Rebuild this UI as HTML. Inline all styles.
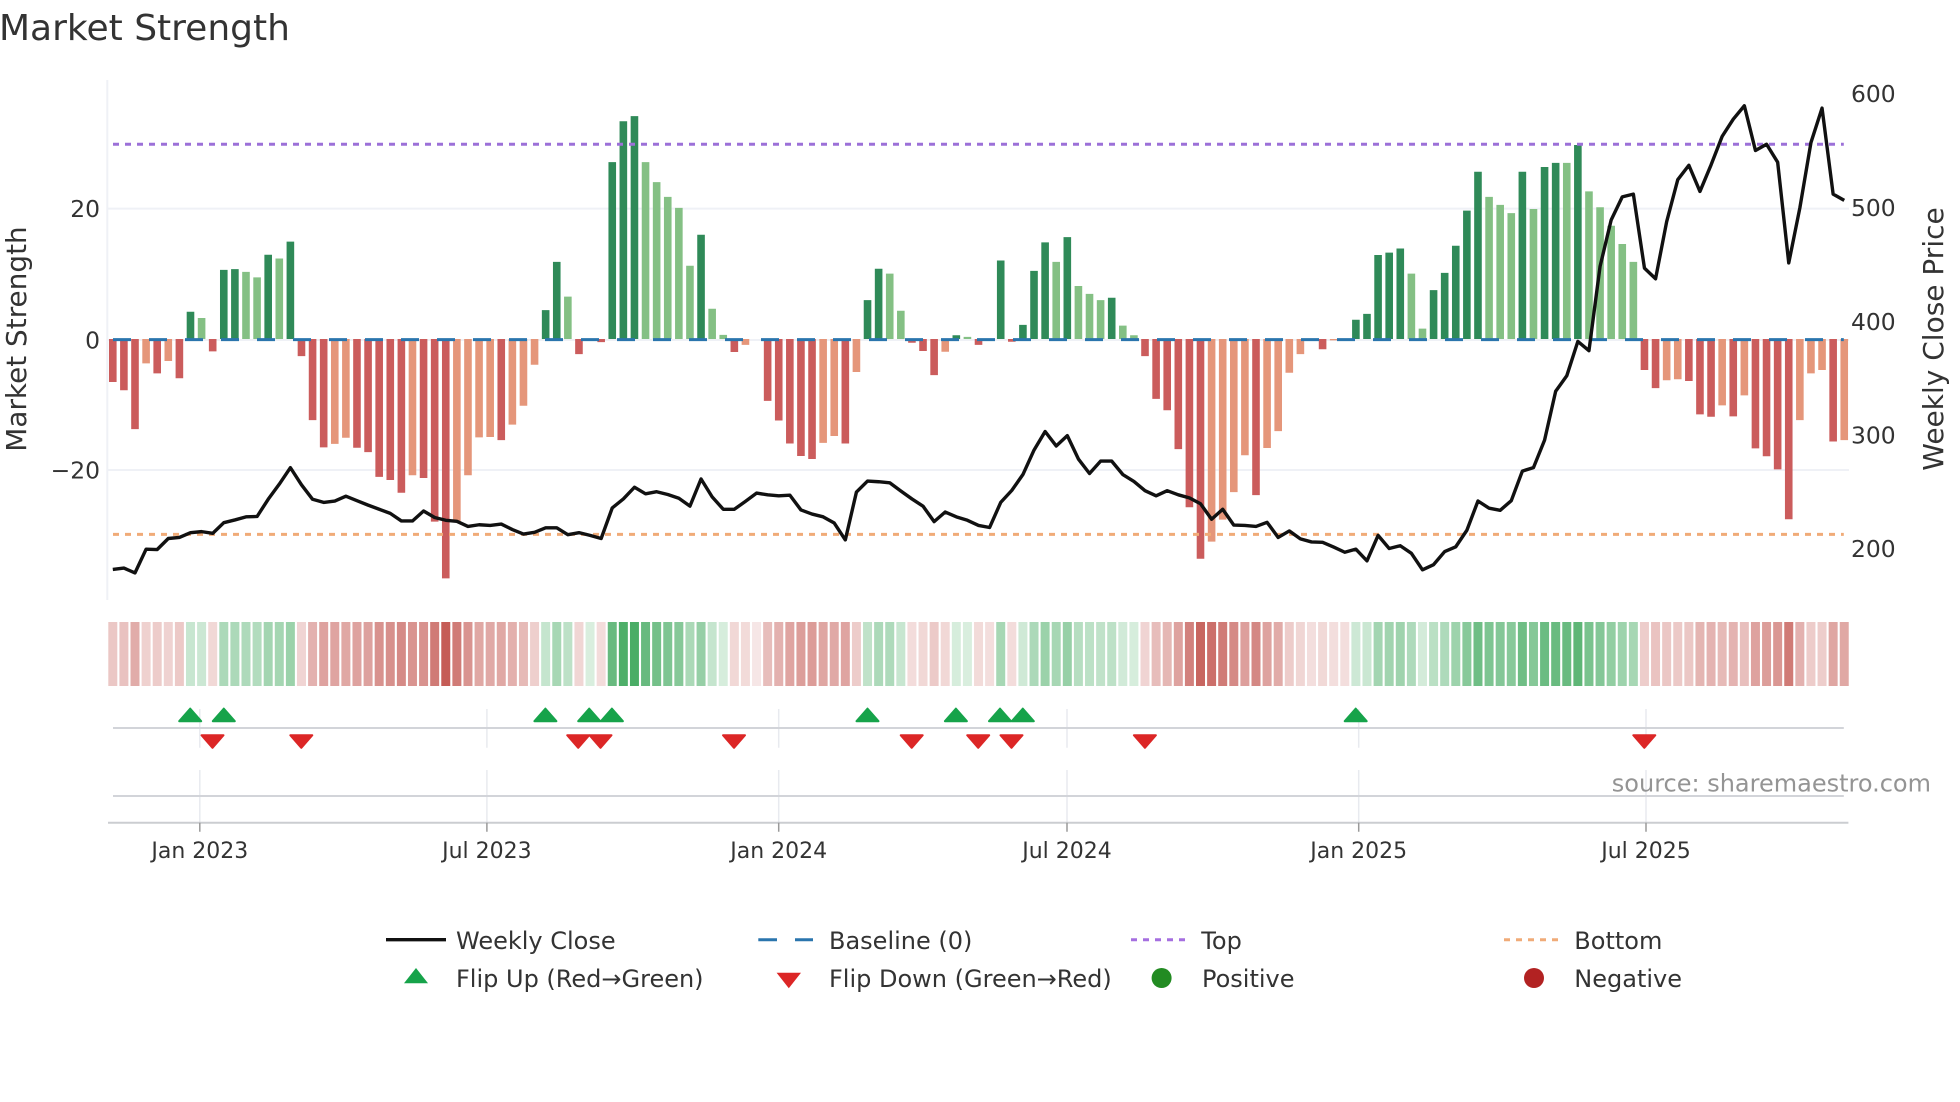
<!DOCTYPE html>
<html><head><meta charset="utf-8"><title>Market Strength</title>
<style>html,body{margin:0;padding:0;background:#fff}svg{display:block}text{font-family:"DejaVu Sans","Liberation Sans",sans-serif;fill:#333}</style></head>
<body>
<svg width="1960" height="1102" viewBox="0 0 1960 1102" xmlns="http://www.w3.org/2000/svg">
<rect width="1960" height="1102" fill="#fff"/>
<text x="-1" y="40" font-size="36">Market Strength</text>
<!-- main grid -->
<g stroke="#eff1f6" stroke-width="2" fill="none">
<path d="M107.3 80V600"/>
<path d="M107 208.6H1849M107 340H1849M107 470H1849"/>
</g>
<!-- bars: x = index, y = source units -->
<g transform="translate(112.8,60) scale(11.099,0.344)" fill="none" stroke-width=".685">
<path stroke="#2f8a58" d="M7 811V732M10 811V610M11 811V608M14 811V566M16 811V528M39 811V727M40 811V587M45 811V297M46 811V178M47 811V163M53 811V508M68 811V698M69 811V607M76 811V800M80 811V583M82 811V770M83 811V613M84 811V530M86 811V515M90 811V691M112 811V755M113 811V738M114 811V567M115 811V560M116 811V548M119 811V669M120 811V619M121 811V540M122 811V438M123 811V325M127 811V325M129 811V311M130 811V299M132 811V247"/>
<path stroke="#84c084" d="M8 811V750M12 811V616M13 811V632M15 811V577M41 811V688M48 811V297M49 811V355M50 811V398M51 811V430M52 811V598M54 811V723M55 811V799M70 811V621M71 811V729M77 811V805M85 811V587M87 811V657M88 811V680M89 811V698M91 811V772M92 811V800M117 811V621M118 811V781M124 811V398M125 811V421M126 811V445M128 811V433M131 811V299M133 811V382M134 811V428M135 811V482M136 811V535M137 811V587"/>
<path stroke="#cb5c5c" d="M0 811V936M1 811V960M2 811V1073M4 811V911M6 811V925M9 811V847M17 811V861M18 811V1047M19 811V1126M22 811V1127M23 811V1140M24 811V1212M25 811V1221M26 811V1258M28 811V1215M29 811V1342M30 811V1507M35 811V1105M42 811V855M44 811V820M56 811V849M59 811V991M60 811V1048M61 811V1115M62 811V1151M63 811V1160M66 811V1115M72 811V822M73 811V846M74 811V916M78 811V828M81 811V819M93 811V861M94 811V985M95 811V1018M96 811V1131M97 811V1300M98 811V1450M103 811V1265M109 811V841M138 811V901M139 811V954M142 811V933M143 811V1030M144 811V1037M146 811V1036M148 811V1129M149 811V1152M150 811V1190M151 811V1335M155 811V1109"/>
<path stroke="#e5967a" d="M3 811V882M5 811V875M20 811V1116M21 811V1098M27 811V1207M31 811V1340M32 811V1207M33 811V1097M34 811V1096M36 811V1060M37 811V1005M38 811V886M57 811V828M64 811V1113M65 811V1093M67 811V907M75 811V848M99 811V1400M100 811V1336M101 811V1256M102 811V1149M104 811V1128M105 811V1079M106 811V909M107 811V855M110 811V815M140 811V931M141 811V928M145 811V1004M147 811V975M152 811V1047M153 811V911M154 811V901M156 811V1105"/>
</g>
<!-- reference lines -->
<path d="M113 339.6H1843.8" stroke="#2a75ad" stroke-width="3" stroke-dasharray="18 18" fill="none"/>
<path d="M113 144.3H1843.8" stroke="#9c70d8" stroke-width="3" stroke-dasharray="6 6" fill="none"/>
<path d="M113 534.4H1843.8" stroke="#f0ab78" stroke-width="3" stroke-dasharray="6 6" fill="none"/>
<!-- weekly close -->
<g transform="translate(112.8,60) scale(11.099,0.344)">
<polyline fill="none" stroke="#111" stroke-width="3.4" stroke-linejoin="round" vector-effect="non-scaling-stroke" points="0,1481 1,1477 2,1491 3,1422 4,1423 5,1391 6,1388 7,1374 8,1371 9,1376 10,1345 11,1337 12,1328 13,1327 14,1277 15,1233 16,1185 17,1235 18,1277 19,1286 20,1282 21,1268 22,1281 23,1294 24,1306 25,1318 26,1340 27,1340 28,1311 29,1330 30,1338 31,1341 32,1356 33,1351 34,1353 35,1349 36,1365 37,1378 38,1373 39,1360 40,1360 41,1380 42,1374 43,1382 44,1391 45,1302 46,1276 47,1242 48,1261 49,1255 50,1263 51,1274 52,1297 53,1218 54,1270 55,1306 56,1306 57,1283 58,1259 59,1264 60,1267 61,1265 62,1308 63,1320 64,1328 65,1346 66,1395 67,1256 68,1224 69,1226 70,1229 71,1253 72,1276 73,1297 74,1342 75,1314 76,1328 77,1338 78,1353 79,1359 80,1286 81,1251 82,1205 83,1134 84,1080 85,1122 86,1092 87,1160 88,1202 89,1166 90,1166 91,1205 92,1225 93,1252 94,1267 95,1252 96,1264 97,1273 98,1290 99,1335 100,1306 101,1352 102,1353 103,1356 104,1344 105,1388 106,1369 107,1392 108,1401 109,1402 110,1416 111,1431 112,1422 113,1456 114,1382 115,1420 116,1412 117,1434 118,1482 119,1467 120,1429 121,1415 122,1367 123,1282 124,1303 125,1309 126,1281 127,1195 128,1185 129,1105 130,963 131,918 132,818 133,845 134,600 135,465 136,398 137,390 138,605 139,636 140,470 141,348 142,306 143,382 144,305 145,222 146,172 147,133 148,263 149,245 150,297 151,590 152,430 153,240 154,140 155,390 156,408"/>
</g>
<!-- y labels -->
<g font-size="23.4" text-anchor="end">
<text x="100" y="217">20</text>
<text x="100" y="348.4">0</text>
<text x="100" y="478.4">−20</text>
</g>
<g font-size="23.4">
<text x="1851" y="102">600</text>
<text x="1851" y="216">500</text>
<text x="1851" y="329.8">400</text>
<text x="1851" y="443.4">300</text>
<text x="1851" y="556.9">200</text>
</g>
<text font-size="27.9" text-anchor="middle" transform="translate(26,339) rotate(-90)">Market Strength</text>
<text font-size="28" text-anchor="middle" transform="translate(1943,339) rotate(-90)">Weekly Close Price</text>
<!-- heat strip -->
<g transform="translate(112.8,622) scale(11.099,64)" fill="none" stroke-width=".81">
<g stroke="#c45a54">
<path d="M0 0V1" stroke-opacity=".34"/><path d="M1 0V1" stroke-opacity=".37"/><path d="M2 0V1" stroke-opacity=".5"/><path d="M3 0V1" stroke-opacity=".28"/><path d="M4 0V1" stroke-opacity=".31"/><path d="M5 0V1" stroke-opacity=".27"/><path d="M6 0V1" stroke-opacity=".33"/><path d="M9 0V1" stroke-opacity=".24"/><path d="M17 0V1" stroke-opacity=".26"/><path d="M18 0V1" stroke-opacity=".47"/><path d="M19 0V1" stroke-opacity=".56"/><path d="M20 0V1" stroke-opacity=".55"/><path d="M21 0V1" stroke-opacity=".53"/><path d="M22 0V1" stroke-opacity=".56"/><path d="M23 0V1" stroke-opacity=".57"/><path d="M24 0V1" stroke-opacity=".66"/><path d="M25 0V1" stroke-opacity=".67"/><path d="M26 0V1" stroke-opacity=".71"/><path d="M27 0V1" stroke-opacity=".65"/><path d="M28 0V1" stroke-opacity=".66"/><path d="M29 0V1" stroke-opacity=".8"/><path d="M30 0V1" stroke-opacity=".99"/><path d="M31 0V1" stroke-opacity=".8"/><path d="M32 0V1" stroke-opacity=".65"/><path d="M33 0V1" stroke-opacity=".53"/><path d="M34 0V1" stroke-opacity=".52"/><path d="M35 0V1" stroke-opacity=".53"/><path d="M36 0V1" stroke-opacity=".48"/><path d="M37 0V1" stroke-opacity=".42"/><path d="M38 0V1" stroke-opacity=".29"/><path d="M42 0V1" stroke-opacity=".25"/><path d="M44 0V1" stroke-opacity=".21"/><path d="M56 0V1" stroke-opacity=".24"/><path d="M57 0V1" stroke-opacity=".22"/><path d="M58 0V1" stroke-opacity=".15"/><path d="M59 0V1" stroke-opacity=".4"/><path d="M60 0V1" stroke-opacity=".47"/><path d="M61 0V1" stroke-opacity=".55"/><path d="M62 0V1" stroke-opacity=".59"/><path d="M63 0V1" stroke-opacity=".6"/><path d="M64 0V1" stroke-opacity=".54"/><path d="M65 0V1" stroke-opacity=".52"/><path d="M66 0V1" stroke-opacity=".55"/><path d="M67 0V1" stroke-opacity=".31"/><path d="M72 0V1" stroke-opacity=".21"/><path d="M73 0V1" stroke-opacity=".24"/><path d="M74 0V1" stroke-opacity=".32"/><path d="M75 0V1" stroke-opacity=".24"/><path d="M78 0V1" stroke-opacity=".22"/><path d="M79 0V1" stroke-opacity=".2"/><path d="M81 0V1" stroke-opacity=".21"/><path d="M93 0V1" stroke-opacity=".26"/><path d="M94 0V1" stroke-opacity=".4"/><path d="M95 0V1" stroke-opacity=".44"/><path d="M96 0V1" stroke-opacity=".56"/><path d="M97 0V1" stroke-opacity=".76"/><path d="M98 0V1" stroke-opacity=".93"/><path d="M99 0V1" stroke-opacity=".87"/><path d="M100 0V1" stroke-opacity=".8"/><path d="M101 0V1" stroke-opacity=".71"/><path d="M102 0V1" stroke-opacity=".58"/><path d="M103 0V1" stroke-opacity=".72"/><path d="M104 0V1" stroke-opacity=".56"/><path d="M105 0V1" stroke-opacity=".51"/><path d="M106 0V1" stroke-opacity=".31"/><path d="M107 0V1" stroke-opacity=".25"/><path d="M108 0V1" stroke-opacity=".2"/><path d="M109 0V1" stroke-opacity=".23"/><path d="M110 0V1" stroke-opacity=".2"/><path d="M111 0V1" stroke-opacity=".2"/><path d="M138 0V1" stroke-opacity=".3"/><path d="M139 0V1" stroke-opacity=".36"/><path d="M140 0V1" stroke-opacity=".34"/><path d="M141 0V1" stroke-opacity=".33"/><path d="M142 0V1" stroke-opacity=".34"/><path d="M143 0V1" stroke-opacity=".45"/><path d="M144 0V1" stroke-opacity=".46"/><path d="M145 0V1" stroke-opacity=".42"/><path d="M146 0V1" stroke-opacity=".46"/><path d="M147 0V1" stroke-opacity=".39"/><path d="M148 0V1" stroke-opacity=".56"/><path d="M149 0V1" stroke-opacity=".59"/><path d="M150 0V1" stroke-opacity=".63"/><path d="M151 0V1" stroke-opacity=".8"/><path d="M152 0V1" stroke-opacity=".47"/><path d="M153 0V1" stroke-opacity=".31"/><path d="M154 0V1" stroke-opacity=".3"/><path d="M155 0V1" stroke-opacity=".54"/><path d="M156 0V1" stroke-opacity=".53"/>
</g>
<g stroke="#3fa85c">
<path d="M7 0V1" stroke-opacity=".29"/><path d="M8 0V1" stroke-opacity=".27"/><path d="M10 0V1" stroke-opacity=".43"/><path d="M11 0V1" stroke-opacity=".43"/><path d="M12 0V1" stroke-opacity=".42"/><path d="M13 0V1" stroke-opacity=".4"/><path d="M14 0V1" stroke-opacity=".48"/><path d="M15 0V1" stroke-opacity=".47"/><path d="M16 0V1" stroke-opacity=".52"/><path d="M39 0V1" stroke-opacity=".3"/><path d="M40 0V1" stroke-opacity=".46"/><path d="M41 0V1" stroke-opacity=".34"/><path d="M43 0V1" stroke-opacity=".2"/><path d="M45 0V1" stroke-opacity=".79"/><path d="M46 0V1" stroke-opacity=".92"/><path d="M47 0V1" stroke-opacity=".94"/><path d="M48 0V1" stroke-opacity=".79"/><path d="M49 0V1" stroke-opacity=".72"/><path d="M50 0V1" stroke-opacity=".67"/><path d="M51 0V1" stroke-opacity=".63"/><path d="M52 0V1" stroke-opacity=".44"/><path d="M53 0V1" stroke-opacity=".55"/><path d="M54 0V1" stroke-opacity=".3"/><path d="M55 0V1" stroke-opacity=".21"/><path d="M68 0V1" stroke-opacity=".33"/><path d="M69 0V1" stroke-opacity=".43"/><path d="M70 0V1" stroke-opacity=".42"/><path d="M71 0V1" stroke-opacity=".29"/><path d="M76 0V1" stroke-opacity=".21"/><path d="M77 0V1" stroke-opacity=".2"/><path d="M80 0V1" stroke-opacity=".46"/><path d="M82 0V1" stroke-opacity=".25"/><path d="M83 0V1" stroke-opacity=".43"/><path d="M84 0V1" stroke-opacity=".52"/><path d="M85 0V1" stroke-opacity=".46"/><path d="M86 0V1" stroke-opacity=".54"/><path d="M87 0V1" stroke-opacity=".38"/><path d="M88 0V1" stroke-opacity=".35"/><path d="M89 0V1" stroke-opacity=".33"/><path d="M90 0V1" stroke-opacity=".34"/><path d="M91 0V1" stroke-opacity=".24"/><path d="M92 0V1" stroke-opacity=".21"/><path d="M112 0V1" stroke-opacity=".26"/><path d="M113 0V1" stroke-opacity=".28"/><path d="M114 0V1" stroke-opacity=".48"/><path d="M115 0V1" stroke-opacity=".49"/><path d="M116 0V1" stroke-opacity=".5"/><path d="M117 0V1" stroke-opacity=".42"/><path d="M118 0V1" stroke-opacity=".23"/><path d="M119 0V1" stroke-opacity=".36"/><path d="M120 0V1" stroke-opacity=".42"/><path d="M121 0V1" stroke-opacity=".51"/><path d="M122 0V1" stroke-opacity=".62"/><path d="M123 0V1" stroke-opacity=".75"/><path d="M124 0V1" stroke-opacity=".67"/><path d="M125 0V1" stroke-opacity=".64"/><path d="M126 0V1" stroke-opacity=".62"/><path d="M127 0V1" stroke-opacity=".75"/><path d="M128 0V1" stroke-opacity=".63"/><path d="M129 0V1" stroke-opacity=".77"/><path d="M130 0V1" stroke-opacity=".78"/><path d="M131 0V1" stroke-opacity=".78"/><path d="M132 0V1" stroke-opacity=".84"/><path d="M133 0V1" stroke-opacity=".69"/><path d="M134 0V1" stroke-opacity=".64"/><path d="M135 0V1" stroke-opacity=".57"/><path d="M136 0V1" stroke-opacity=".51"/><path d="M137 0V1" stroke-opacity=".46"/>
</g>
</g>
<!-- vertical grid in lower panels -->
<g stroke="#e8eaef" stroke-width="1.5" fill="none">
<path d="M199.8 709V747.7M199.8 770V822.7M486.9 709V747.7M486.9 770V822.7M778.7 709V747.7M778.7 770V822.7M1067 709V747.7M1067 770V822.7M1358.7 709V747.7M1358.7 770V822.7M1646 709V747.7M1646 770V822.7"/>
</g>
<g stroke="#d2d4d9" stroke-width="2" fill="none">
<path d="M113 728H1843.8M113 796H1843.8"/>
<path d="M108 822.7H1848.4" stroke="#cbcdd1"/>
</g>
<g stroke="#9a9a9a" stroke-width="1.5" fill="none">
<path d="M199.8 822.7V831.7M486.9 822.7V831.7M778.7 822.7V831.7M1067 822.7V831.7M1358.7 822.7V831.7M1646 822.7V831.7"/>
</g>
<!-- flip markers -->
<g fill="#16a34a" stroke="#16a34a" stroke-width="2" stroke-linejoin="round">
<path d="M190.2 708.6l11 12.6h-22z"/><path d="M223.8 708.6l11 12.6h-22z"/><path d="M545.4 708.6l11 12.6h-22z"/><path d="M589.2 708.6l11 12.6h-22z"/><path d="M611.9 708.6l11 12.6h-22z"/><path d="M867.5 708.6l11 12.6h-22z"/><path d="M955.9 708.6l11 12.6h-22z"/><path d="M1000 708.6l11 12.6h-22z"/><path d="M1022.8 708.6l11 12.6h-22z"/><path d="M1355.7 708.6l11 12.6h-22z"/>
</g>
<g fill="#dc2626" stroke="#dc2626" stroke-width="2" stroke-linejoin="round">
<path d="M212.5 747.8l-11-12.6h22z"/><path d="M301.3 747.8l-11-12.6h22z"/><path d="M578.2 747.8l-11-12.6h22z"/><path d="M600.5 747.8l-11-12.6h22z"/><path d="M734 747.8l-11-12.6h22z"/><path d="M911.7 747.8l-11-12.6h22z"/><path d="M978.2 747.8l-11-12.6h22z"/><path d="M1011.5 747.8l-11-12.6h22z"/><path d="M1144.9 747.8l-11-12.6h22z"/><path d="M1644.3 747.8l-11-12.6h22z"/>
</g>
<text x="1611.8" y="791.7" font-size="24" style="fill:#949494">source: sharemaestro.com</text>
<!-- x labels -->
<g font-size="22" text-anchor="middle">
<text x="199.8" y="858">Jan 2023</text>
<text x="486.9" y="858">Jul 2023</text>
<text x="778.7" y="858">Jan 2024</text>
<text x="1067" y="858">Jul 2024</text>
<text x="1358.7" y="858">Jan 2025</text>
<text x="1646" y="858">Jul 2025</text>
</g>
<!-- legend -->
<path d="M386 939.7H446" stroke="#111" stroke-width="3.4" fill="none"/>
<path d="M758.3 939.7H777M795 939.7H813" stroke="#2a75ad" stroke-width="3" fill="none"/>
<path d="M1131 939.7H1186" stroke="#a56fe0" stroke-width="3" stroke-dasharray="6 6" fill="none"/>
<path d="M1504 939.7H1559" stroke="#f0ab78" stroke-width="3" stroke-dasharray="6 6" fill="none"/>
<path d="M416 968L428 983.3H404Z" fill="#16a34a"/>
<path d="M788.8 988.3L776.6 972.7H801Z" fill="#dc2626"/>
<ellipse cx="1161.6" cy="978" rx="10" ry="10" fill="#228b22"/>
<ellipse cx="1534" cy="978" rx="10" ry="10" fill="#b22222"/>
<g font-size="24">
<text x="456" y="949">Weekly Close</text>
<text x="829" y="949">Baseline (0)</text>
<text x="1201.3" y="949">Top</text>
<text x="1574.3" y="949">Bottom</text>
<text x="456" y="987">Flip Up (Red→Green)</text>
<text x="829" y="987">Flip Down (Green→Red)</text>
<text x="1202" y="987">Positive</text>
<text x="1574.3" y="987">Negative</text>
</g>
</svg>
</body></html>
